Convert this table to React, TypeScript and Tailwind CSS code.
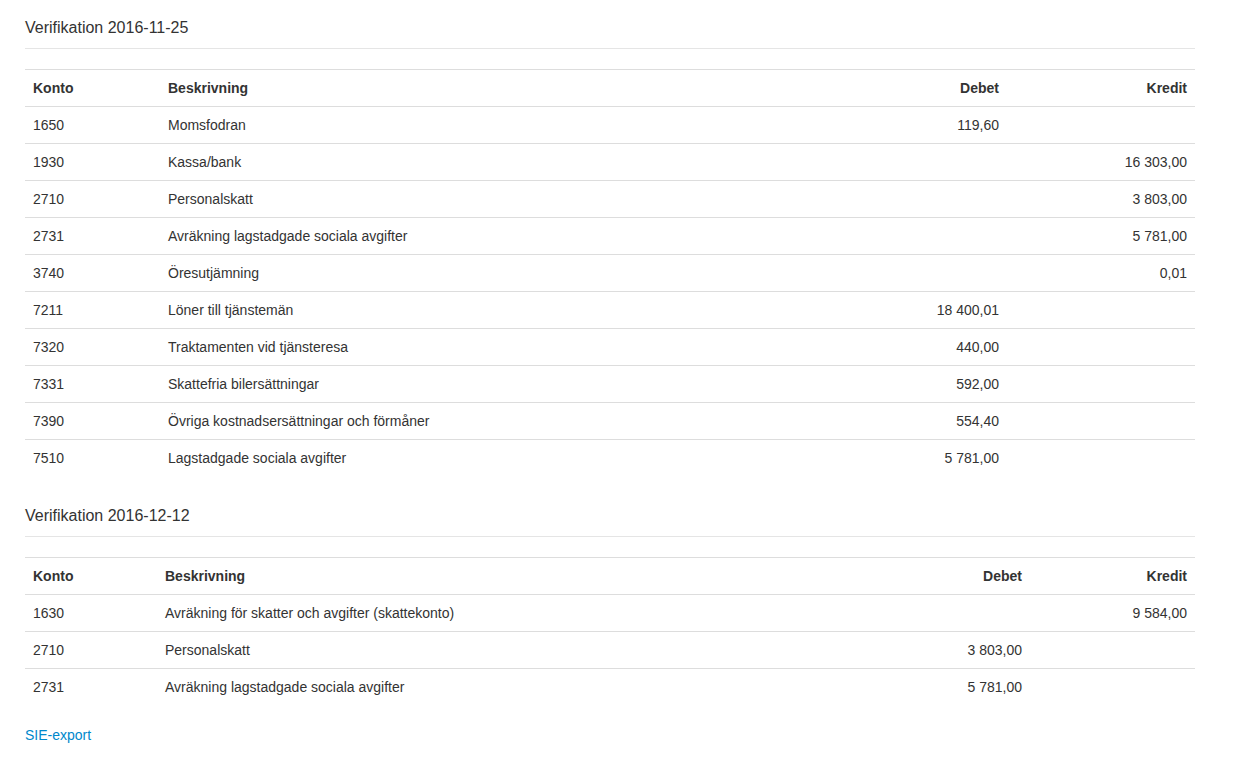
import React from 'react';

type Row = { konto: string; text: string; debet?: string; kredit?: string };

const ver1: Row[] = [
  { konto: '1650', text: 'Momsfodran', debet: '119,60' },
  { konto: '1930', text: 'Kassa/bank', kredit: '16 303,00' },
  { konto: '2710', text: 'Personalskatt', kredit: '3 803,00' },
  { konto: '2731', text: 'Avräkning lagstadgade sociala avgifter', kredit: '5 781,00' },
  { konto: '3740', text: 'Öresutjämning', kredit: '0,01' },
  { konto: '7211', text: 'Löner till tjänstemän', debet: '18 400,01' },
  { konto: '7320', text: 'Traktamenten vid tjänsteresa', debet: '440,00' },
  { konto: '7331', text: 'Skattefria bilersättningar', debet: '592,00' },
  { konto: '7390', text: 'Övriga kostnadsersättningar och förmåner', debet: '554,40' },
  { konto: '7510', text: 'Lagstadgade sociala avgifter', debet: '5 781,00' },
];

const ver2: Row[] = [
  { konto: '1630', text: 'Avräkning för skatter och avgifter (skattekonto)', kredit: '9 584,00' },
  { konto: '2710', text: 'Personalskatt', debet: '3 803,00' },
  { konto: '2731', text: 'Avräkning lagstadgade sociala avgifter', debet: '5 781,00' },
];

function Verifikation({ title, rows, widths, first }: { title: string; rows: Row[]; widths: number[]; first?: boolean }) {
  return (
    <div>
      <h4 className={`${first ? 'mt-[18px]' : 'mt-[30px]'} pb-[10px] border-b border-[#e5e5e5] text-[16px] leading-[20px] font-normal`}>
        {title}
      </h4>
      <table className="w-full table-fixed border-collapse mt-[20px] mb-[20px]">
        <colgroup>
          <col style={{ width: widths[0] }} />
          <col />
          <col style={{ width: widths[1] }} />
          <col style={{ width: widths[2] }} />
        </colgroup>
        <thead>
          <tr>
            <th className="border-t border-[#ddd] px-2 py-2 text-left font-bold leading-5">Konto</th>
            <th className="border-t border-[#ddd] px-2 py-2 text-left font-bold leading-5">Beskrivning</th>
            <th className="border-t border-[#ddd] px-2 py-2 text-right font-bold leading-5">Debet</th>
            <th className="border-t border-[#ddd] px-2 py-2 text-right font-bold leading-5">Kredit</th>
          </tr>
        </thead>
        <tbody>
          {rows.map((r, i) => (
            <tr key={i}>
              <td className="border-t border-[#ddd] px-2 py-2 leading-5">{r.konto}</td>
              <td className="border-t border-[#ddd] px-2 py-2 leading-5">{r.text}</td>
              <td className="border-t border-[#ddd] px-2 py-2 leading-5 text-right">{r.debet}</td>
              <td className="border-t border-[#ddd] px-2 py-2 leading-5 text-right">{r.kredit}</td>
            </tr>
          ))}
        </tbody>
      </table>
    </div>
  );
}

export default function App() {
  return (
    <div className="min-h-screen bg-white text-[14px] leading-5 text-[#333] font-['Liberation_Sans',Arial,sans-serif]">
      <div className="ml-[25px] w-[1170px]">
        <Verifikation first title="Verifikation 2016-11-25" rows={ver1} widths={[135, 150, 188]} />
        <Verifikation title="Verifikation 2016-12-12" rows={ver2} widths={[132, 150, 165]} />
        <p>
          <a href="#" className="text-[#0088cc] hover:underline">SIE-export</a>
        </p>
      </div>
    </div>
  );
}
